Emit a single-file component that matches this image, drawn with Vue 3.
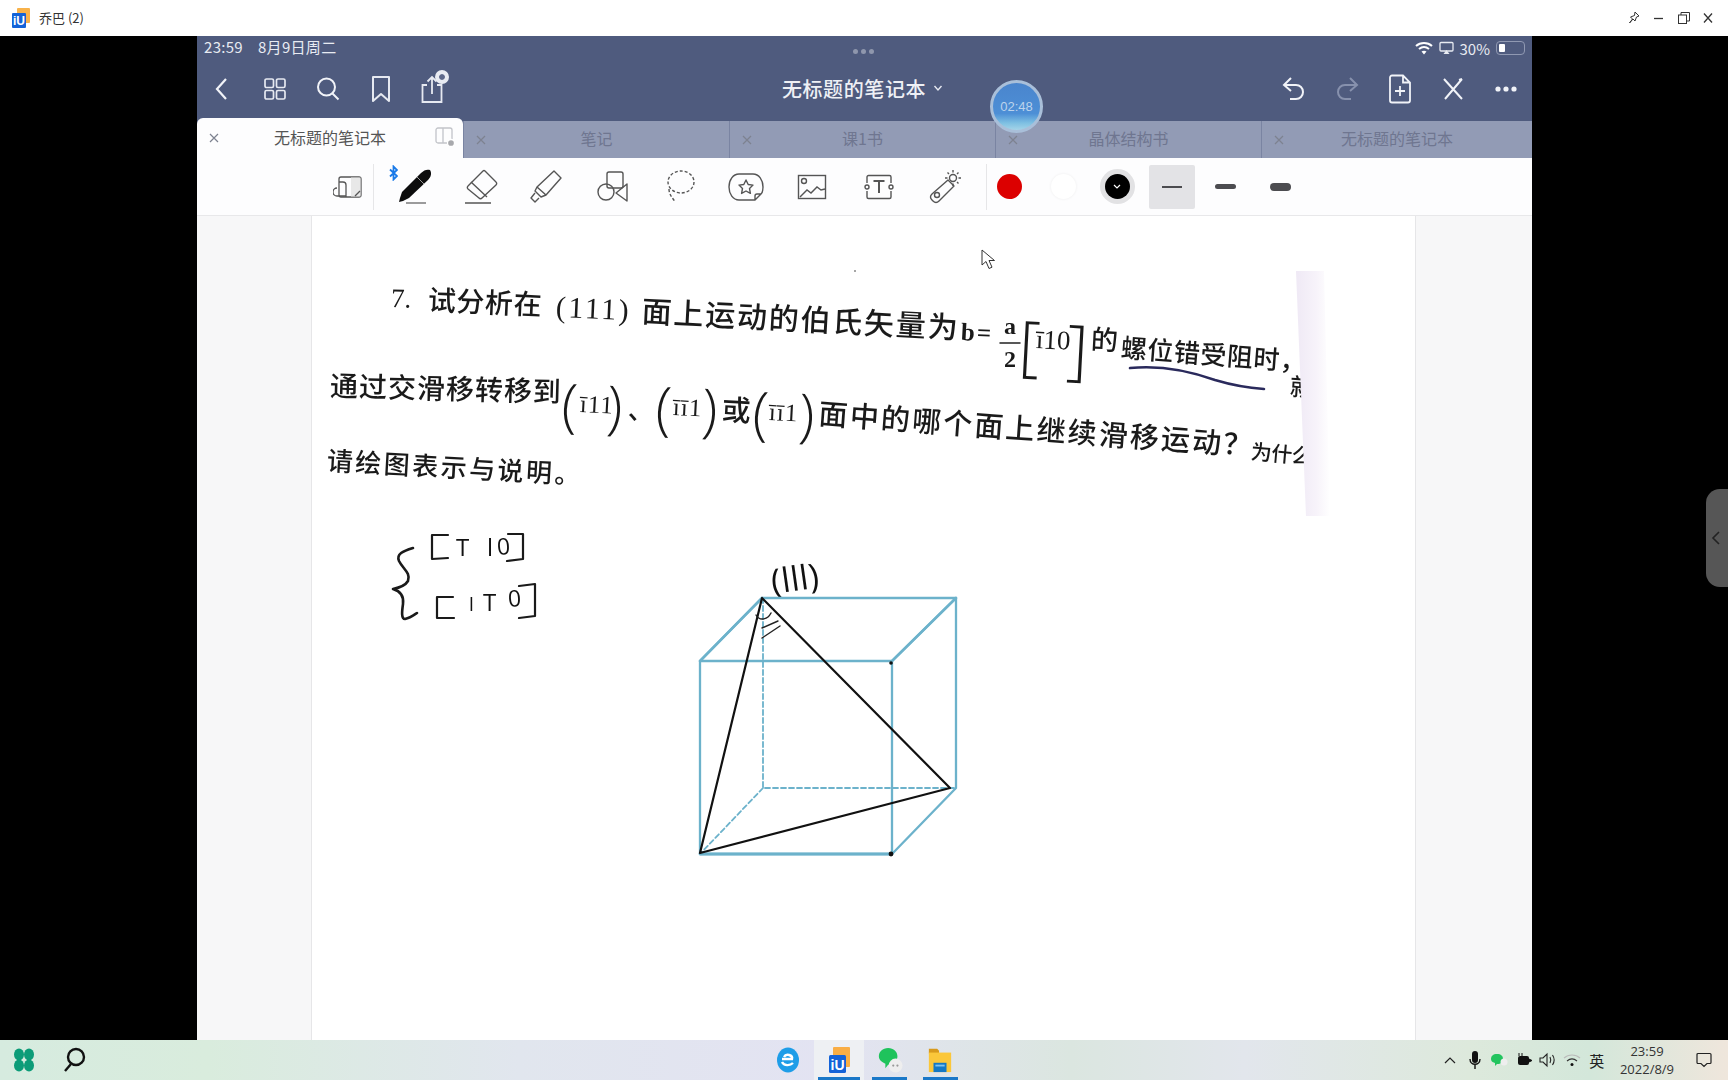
<template>
  <div class="screen">
    <header class="titlebar">
      <svg class="app-logo" width="20" height="20" viewBox="0 0 20 20">
        <rect x="6" y="0" width="13" height="15" rx="1" fill="#f8b24a" />
        <rect x="1" y="5" width="14" height="15" rx="1" fill="#1463d8" />
        <text x="8" y="17" font-size="12" font-weight="700" fill="#fff" text-anchor="middle" font-family="Liberation Sans, sans-serif">iU</text>
      </svg>
      <span class="app-name">乔巴 (2)</span>
      <div class="win-btns">
        <svg width="16" height="16" viewBox="0 0 16 16" fill="none" stroke="#333" stroke-width="1"><path d="M9 2l4 4-2.5 1-1.5 4-2-2-3.5 4 3-4-2-2 4-1.500z" /></svg>
        <svg width="16" height="16" viewBox="0 0 16 16" stroke="#333" stroke-width="1.300"><path d="M3 8.500h9" /></svg>
        <svg width="16" height="16" viewBox="0 0 16 16" fill="none" stroke="#333" stroke-width="1"><rect x="2.500" y="5" width="8" height="8.500" /><path d="M5 5V2.500h8.500V11H10.500" /></svg>
        <svg width="14" height="16" viewBox="0 0 14 16" stroke="#333" stroke-width="1.300"><path d="M3 3.500l8 9M11 3.500l-8 9" /></svg>
      </div>
    </header>

    <main class="stage">
      <section class="ipad">
        <div class="head">
          <div class="status">
            <span class="clock"><span>23:59</span><span>8月9日周二</span></span>
            <div class="grip"><i></i><i></i><i></i></div>
            <div class="status-right">
              <svg width="18" height="14" viewBox="0 0 18 14" fill="none" stroke="#fff" stroke-width="2"><path d="M1 5c4.500-4 11.500-4 16 0M4 8c3-2.500 7-2.500 10 0" /><path d="M9 13.500l-2.500-3c1.500-1 3.500-1 5 0z" fill="#fff" stroke="none" /></svg>
              <svg width="15" height="14" viewBox="0 0 15 14" fill="none" stroke="#e8ebf2" stroke-width="1.300"><rect x="1" y="1.500" width="13" height="8.500" rx="1" /><path d="M7.500 9l-3 4h6z" fill="#e8ebf2" stroke="none" /></svg>
              <span class="pct">30%</span>
              <span class="battery"><b></b></span>
            </div>
          </div>

          <nav class="nav">
            <div class="nav-side">
              <span class="cell"><svg width="24" height="28" viewBox="0 0 24 28" fill="none" stroke="#f1f3f8" stroke-width="2.200"><path d="M16 4L7 14l9 10" /></svg></span>
              <span class="cell"><svg width="24" height="24" viewBox="0 0 24 24" fill="none" stroke="#e6e9f1" stroke-width="1.700"><rect x="2" y="2" width="8.500" height="8.500" rx="1.500" /><rect x="13.500" y="2" width="8.500" height="8.500" rx="1.500" /><rect x="2" y="13.500" width="8.500" height="8.500" rx="1.500" /><rect x="13.500" y="13.500" width="8.500" height="8.500" rx="1.500" /></svg></span>
              <span class="cell"><svg width="26" height="26" viewBox="0 0 26 26" fill="none" stroke="#f1f3f8" stroke-width="2"><circle cx="11.500" cy="11" r="8.500" /><path d="M17.500 17.500l6 6" /></svg></span>
              <span class="cell"><svg width="22" height="28" viewBox="0 0 22 28" fill="none" stroke="#e6e9f1" stroke-width="2"><path d="M3 2h16v24l-8-7-8 7z" stroke-linejoin="round" /></svg></span>
              <span class="cell share">
                <svg width="24" height="30" viewBox="0 0 24 30" fill="none" stroke="#e6e9f1" stroke-width="1.800"><path d="M7 11H2.500v17h19V11H17M12 20V3M7.500 7.500L12 3l4.500 4.500" /></svg>
                <em class="share-badge"></em>
              </span>
            </div>
            <div class="nav-title">无标题的笔记本<svg width="10" height="8" viewBox="0 0 10 8" fill="none" stroke="#e6e9f1" stroke-width="1.400"><path d="M1.500 2L5 6l3.500-4" /></svg></div>
            <div class="nav-side end">
              <span class="cell"><svg width="24" height="28" viewBox="0 0 24 28" fill="none" stroke="#f1f3f8" stroke-width="2"><path d="M9 3L2 10l7 6M2 10h12c4 0 7 3 7 7s-3 7-7 7H8" /></svg></span>
              <span class="cell"><svg width="24" height="28" viewBox="0 0 24 28" fill="none" stroke="#8791ad" stroke-width="2"><path d="M15 3l7 7-7 6M22 10H10c-4 0-7 3-7 7s3 7 7 7h6" /></svg></span>
              <span class="cell"><svg width="24" height="30" viewBox="0 0 24 30" fill="none" stroke="#f1f3f8" stroke-width="1.800"><path d="M15 1.500H4a2 2 0 0 0-2 2v23a2 2 0 0 0 2 2h16a2 2 0 0 0 2-2V8.500zM15 1.500v7h7M12 12v10M7 17h10" /></svg></span>
              <span class="cell"><svg width="22" height="24" viewBox="0 0 22 24" fill="none" stroke="#f1f3f8" stroke-width="2"><path d="M2 2l18 20M20 2L3 22M20 2l-3 1" /></svg></span>
              <span class="cell"><svg width="24" height="6" viewBox="0 0 24 6" fill="#f1f3f8"><circle cx="4" cy="3" r="2.600" /><circle cx="12" cy="3" r="2.600" /><circle cx="20" cy="3" r="2.600" /></svg></span>
            </div>
          </nav>

          <div class="tabs">
            <div v-for="(tab, i) in tabs" :key="i" class="tab" :class="{ active: i === 0 }">
              <svg class="tab-x" width="10" height="10" viewBox="0 0 10 10" stroke="#7d8290" stroke-width="1.200"><path d="M1 1l8 8M9 1l-8 8" /></svg>
              <span>{{ tab }}</span>
              <svg v-if="i === 0" class="tab-split" width="20" height="20" viewBox="0 0 20 20" fill="none" stroke="#c2c4c9" stroke-width="1.300"><rect x="1" y="1" width="16" height="15" rx="2" /><path d="M8 1v15" /><circle cx="16" cy="16" r="3.500" fill="#a8a9ad" stroke="#fff" /></svg>
            </div>
          </div>

          <div class="timer"><span>02:48</span></div>
        </div>

        <div class="tools">
          <span class="tool"><svg width="30" height="26" viewBox="0 0 30 26" fill="none" stroke="#555" stroke-width="1.300"><rect x="6" y="3" width="22" height="20" rx="2" /><path d="M18 3.500h9.500v19h-9.500z" fill="#e8e8e8" stroke="none" /><path d="M6 8h4a3 3 0 0 1 3 3v12M4 14a4 4 0 0 0 0 8h9M22 22l5-5" /></svg></span>
          <i class="sep first"></i>
          <span class="tool pen">
            <svg class="bt" width="9" height="16" viewBox="0 0 9 16" fill="none" stroke="#1a7ae8" stroke-width="1.800"><path d="M1 4.500l7 6.500-3.500 3.500V1.500L8 5 1 11.500" /></svg>
            <svg width="38" height="36" viewBox="0 0 38 36"><path d="M35 1c2 3 1 7-2 10L14 29l-6 3-4 1 1-4 2-6L26 4c3-3 6-4 9-3z" fill="#0d0d0d" /><path d="M22 8l7 7" stroke="#999" stroke-width="1" /><path d="M11 34h20" stroke="#666" stroke-width="1.300" /></svg>
          </span>
          <span class="tool"><svg width="36" height="36" viewBox="0 0 36 36" fill="none" stroke="#555" stroke-width="1.400" stroke-linejoin="round"><path d="M22 2l11 11a2 2 0 0 1 0 3L19 29a2 2 0 0 1-3 0L5 20a2 2 0 0 1 0-3L20 2a1.500 1.500 0 0 1 2 0z" /><path d="M8 13l16 15M2 34h26" /></svg></span>
          <span class="tool"><svg width="36" height="36" viewBox="0 0 36 36" fill="none" stroke="#555" stroke-width="1.400" stroke-linejoin="round"><path d="M25 2l7 7-15 17-9-8zM8 18l-2 4 6 6 5-2M6 24l-4 5 4 4 4-4" /></svg></span>
          <span class="tool"><svg width="34" height="34" viewBox="0 0 34 34" fill="none" stroke="#555" stroke-width="1.400"><rect x="11" y="2" width="16" height="16" rx="2" /><circle cx="10" cy="22" r="8" /><path d="M31 14v17l-11-8z" stroke-linejoin="round" /></svg></span>
          <span class="tool"><svg width="32" height="36" viewBox="0 0 32 36" fill="none" stroke="#555" stroke-width="1.400" stroke-dasharray="3 2"><ellipse cx="17" cy="13" rx="13" ry="11" /><path d="M5 20c0 6 4 9 6 13" /></svg></span>
          <span class="tool"><svg width="36" height="30" viewBox="0 0 36 30" fill="none" stroke="#555" stroke-width="1.400" stroke-linejoin="round"><path d="M27 28H11C5 28 1 22 1 15S5 2 11 2h14c6 0 10 6 10 13 0 3-1 6-2 7l-6 6zM27 28v-4c0-1.500 1-2 2-2h4" /><path d="M18 8l2.200 4.500 4.800.6-3.500 3.400.9 4.900-4.400-2.400-4.400 2.400.9-4.900-3.500-3.400 4.800-.6z" /></svg></span>
          <span class="tool"><svg width="30" height="26" viewBox="0 0 30 26" fill="none" stroke="#555" stroke-width="1.400"><rect x="1.500" y="1.500" width="27" height="23" /><circle cx="7" cy="7" r="2.500" /><path d="M3 23l7-7 4 3 6-6 4 3 4-1" /></svg></span>
          <span class="tool"><svg width="30" height="26" viewBox="0 0 30 26" fill="none" stroke="#555" stroke-width="1.400"><path d="M3 9V3a1.500 1.500 0 0 1 1.500-1.500h21A1.500 1.500 0 0 1 27 3v6M3 17v6a1.500 1.500 0 0 0 1.500 1.500h21A1.500 1.500 0 0 0 27 23v-6" /><circle cx="3" cy="13" r="2" /><circle cx="27" cy="13" r="2" /><path d="M9.500 7h11M15 7v12" stroke-width="2" /></svg></span>
          <span class="tool"><svg width="36" height="36" viewBox="0 0 36 36" fill="none" stroke="#555" stroke-width="1.400"><path d="M21 11l6 6-15 15c-2 2-4 2-6 0l-1-1c-2-2-2-4 0-6z" stroke-linejoin="round" /><circle cx="10" cy="26" r="2.500" /><circle cx="26" cy="9" r="3.500" /><path d="M26 1v2.500M26 14.500V17M18 9h2.500M31.500 9H34M20.500 3.500l1.500 1.500M30 13l1.500 1.500M31.500 3.500L30 5" /></svg></span>
          <i class="sep second"></i>
          <span class="swatch-cell"><b class="swatch red"></b></span>
          <span class="swatch-cell"><b class="swatch white"></b></span>
          <span class="swatch-cell"><b class="swatch black"><svg width="8" height="6" viewBox="0 0 8 6" fill="none" stroke="#fff" stroke-width="1.200"><path d="M1 1l3 3 3-3" /></svg></b></span>
          <span class="swatch-cell picked"><b class="line thin"></b></span>
          <span class="swatch-cell"><b class="line mid"></b></span>
          <span class="swatch-cell"><b class="line thick"></b></span>
        </div>

        <div class="doc">
          <article class="page">
            <div class="scan">
              <span
                v-for="(s, i) in segments"
                :key="i"
                class="seg"
                :class="s.f"
                :style="segStyle(s)"
              >{{ s.t }}</span>
            </div>
            <svg class="ink" width="1103" height="825" viewBox="312 215 1103 825" fill="none" stroke-linecap="round" stroke-linejoin="round">
              <defs>
                <linearGradient id="strip" x1="0" y1="0" x2="1" y2="0">
                  <stop offset="0" stop-color="#efe9f5" />
                  <stop offset="0.6" stop-color="#f7f3fa" />
                  <stop offset="1" stop-color="#ffffff" />
                </linearGradient>
              </defs>
              <polygon points="1296,270 1324,270 1330,515 1306,515" fill="url(#strip)" />
              <path d="M1000 342h20" stroke="#222" stroke-width="1.500" />
              <path d="M1130 367C1160 364 1190 370 1215 379 1235 385 1250 387 1264 388" stroke="#2a2a5c" stroke-width="2.600" />
              <circle cx="855" cy="270" r="1" fill="#888" />
              <g stroke="#6cb2cb" stroke-width="2.300">
                <path d="M762 597H956L892 660H700ZM700 660V853H892V660M956 597V787L892 853" />
                <path d="M762 597L700 660M956 597L892 660" stroke-width="2.600" />
                <path d="M700 853H892" stroke-width="2.800" />
                <path d="M763 597V787H956M763 787L700 853" stroke-dasharray="5 3" stroke-width="1.800" />
              </g>
              <path d="M762 597L700 852 950 787Z" stroke="#111" stroke-width="2.200" />
              <path d="M756 614C760 621 768 618 771 612M762 627L778 620M762 637L780 625" stroke="#222" stroke-width="1.400" />
              <circle cx="891" cy="662" r="1.800" fill="#111" />
              <circle cx="891" cy="853" r="2.400" fill="#111" />
              <g stroke="#1a1a1a" stroke-width="2.200">
                <path d="M413 547C403 550 396 553 399 560 403 568 411 572 408 580 405 585 398 587 393 588 400 590 404 595 403 603 402 610 401 618 405 618 410 617 414 614 417 612" stroke-width="2.600" />
                <path d="M448 534H432V558L448 557M508 533H523V558L507 560" />
                <path d="M453 596H437V617H454M519 585L535 583V615L519 617" />
              </g>
            </svg>
          </article>
        </div>
      </section>
      <svg class="cursor" width="16" height="22" viewBox="0 0 16 22"><path d="M1 1v15l4-3.500 3 7 3-1.300-3-6.700h5.500z" fill="#fff" stroke="#333" stroke-width="1" /></svg>
      <div class="side-tab"><svg width="10" height="16" viewBox="0 0 10 16" fill="none" stroke="#222" stroke-width="1.600"><path d="M8 2L2 8l6 6" /></svg></div>
    </main>

    <footer class="taskbar">
      <div class="tb-left">
        <svg width="24" height="24" viewBox="0 0 24 24" fill="#0c9c78"><ellipse cx="7" cy="6.500" rx="5" ry="6" /><ellipse cx="17" cy="6.500" rx="5" ry="6" /><ellipse cx="7" cy="17.500" rx="5" ry="6" /><ellipse cx="17" cy="17.500" rx="5" ry="6" /></svg>
        <svg width="26" height="26" viewBox="0 0 26 26" fill="none" stroke="#111" stroke-width="2.400"><circle cx="15" cy="10" r="8" /><path d="M10 17l-6 7" /></svg>
      </div>
      <div class="tb-center">
        <span class="tb-item"><svg width="24" height="26" viewBox="0 0 24 26"><ellipse cx="12" cy="13" rx="11" ry="12.500" fill="#1e9de8" /><path d="M6 12h10c1-4-6-6-8-2M6 15c2 4 8 4 11 1" fill="none" stroke="#fff" stroke-width="2.400" /></svg></span>
        <span class="tb-item current run"><svg width="26" height="28" viewBox="0 0 26 28"><rect x="7" y="1" width="17" height="20" rx="1" fill="#f9ae45" /><rect x="3" y="9" width="17" height="18" rx="1.500" fill="#1463d8" /><text x="11.500" y="24" font-size="14" font-weight="700" fill="#fff" text-anchor="middle" font-family="Liberation Sans, sans-serif">iU</text></svg></span>
        <span class="tb-item run"><svg width="26" height="26" viewBox="0 0 28 28"><path d="M12 1c6 0 10 4 10 9s-4 9-10 9l-3 4v-5C5 16 2 14 2 10c0-5 4-9 10-9z" fill="#1fc35c" /><circle cx="20" cy="20" r="7.500" fill="#eeeeee" /><circle cx="17.500" cy="20" r="1.200" fill="#999" /><circle cx="22" cy="20" r="1.200" fill="#999" /></svg></span>
        <span class="tb-item run"><svg width="26" height="26" viewBox="0 0 26 28"><path d="M1 2h9l2 2v3H1z" fill="#d89a1c" /><rect x="1" y="6" width="24" height="21" fill="#fbc73a" /><rect x="6" y="17" width="14" height="10" fill="#1478c4" /><rect x="8" y="19" width="10" height="2" fill="#7fc2ee" /></svg></span>
      </div>
      <div class="tb-right">
        <span class="tray"><svg width="12" height="8" viewBox="0 0 12 8" fill="none" stroke="#222" stroke-width="1.200"><path d="M1 7l5-5 5 5" /></svg></span>
        <span class="tray"><svg width="14" height="20" viewBox="0 0 14 20"><rect x="4" y="1" width="6" height="12" rx="3" fill="#111" /><path d="M2 9c0 7 10 7 10 0M7 14v5" fill="none" stroke="#111" stroke-width="1.400" /></svg></span>
        <span class="tray"><svg width="18" height="14" viewBox="0 0 18 14"><path d="M7 1c4 0 6 2 6 5s-2 5-6 5l-2 2v-3C2 9 1 8 1 6c0-3 2-5 6-5z" fill="#22c45e" /><circle cx="14" cy="9" r="3.500" fill="#eee" /></svg></span>
        <span class="tray"><svg width="18" height="16" viewBox="0 0 18 16"><rect x="3" y="4" width="11" height="9" rx="2" fill="#111" /><path d="M14 7l3 1.500-3 1.500zM4 4V1M7 4V1" fill="#111" stroke="#111" /></svg></span>
        <span class="tray"><svg width="18" height="16" viewBox="0 0 18 16" fill="none" stroke="#222" stroke-width="1.100"><path d="M1 6h3l4-4v12l-4-4H1zM11 5c1 2 1 4 0 6M13.500 3c2 3 2 7 0 10" /></svg></span>
        <span class="tray"><svg width="18" height="14" viewBox="0 0 18 14" fill="none" stroke="#bbb" stroke-width="1.100"><path d="M1 5c4.500-4 11.500-4 16 0" /><path d="M4 8c3-2.500 7-2.500 10 0" stroke="#333" /><circle cx="9" cy="11.500" r="1.500" fill="#111" stroke="none" /></svg></span>
        <span class="tray lang">英</span>
        <div class="tb-clock"><span>23:59</span><span>2022/8/9</span></div>
        <svg width="16" height="16" viewBox="0 0 16 16" fill="none" stroke="#222" stroke-width="1.200"><path d="M2 1.500h12a1 1 0 0 1 1 1v8a1 1 0 0 1-1 1h-3l-3 3-3-3H2a1 1 0 0 1-1-1v-8a1 1 0 0 1 1-1z" /></svg>
      </div>
    </footer>
  </div>
</template>

<script setup>
const tabs = ['无标题的笔记本', '笔记', '课1书', '晶体结构书', '无标题的笔记本']

// place of each scanned line on the page, in screen pixels
const segments = [
  { t: '7.', x: 391, y: 297, s: 27, r: 2, f: 'num' },
  { t: '试分析在', x: 428, y: 297, s: 28, ls: 0.6, r: 2.5, f: 'cn' },
  { t: '(111)', x: 556, y: 306, s: 30, ls: 2.5, r: 2.5, f: 'num' },
  { t: '面上运动的伯氏矢量为', x: 642, y: 308, s: 30, ls: 1.8, r: 3, f: 'cn' },
  { t: 'b=', x: 961, y: 330, s: 25, ls: 2, r: 3, f: 'num bold' },
  { t: 'a', x: 1004, y: 325, s: 24, r: 0, f: 'num bold' },
  { t: '2', x: 1004, y: 358, s: 24, r: 0, f: 'num bold' },
  { t: '[', x: 1019, y: 341, s: 66, r: 3, f: 'thin' },
  { t: 'ī10', x: 1036, y: 338, s: 27, r: 3, f: 'num' },
  { t: ']', x: 1067, y: 345, s: 66, r: 3, f: 'thin' },
  { t: '的', x: 1091, y: 336, s: 27, r: 3, f: 'cn' },
  { t: '螺位错受阻时，', x: 1121, y: 345, s: 26, ls: 0.6, r: 4.5, f: 'cn' },
  { t: '就', x: 1290, y: 384, s: 24, r: 4, f: 'cn' },

  { t: '通过交滑移转移到', x: 330, y: 383, s: 28, ls: 1, r: 1.5, f: 'cn' },
  { t: '(', x: 562, y: 402, s: 58, r: 3, f: 'thin' },
  { t: 'ī11', x: 580, y: 402, s: 25, ls: 1, r: 3, f: 'num' },
  { t: ')', x: 607, y: 404, s: 58, r: 3, f: 'thin' },
  { t: '、', x: 628, y: 407, s: 26, r: 3, f: 'cn' },
  { t: '(', x: 656, y: 405, s: 58, r: 3, f: 'thin' },
  { t: 'īī1', x: 673, y: 405, s: 25, ls: 1, r: 3, f: 'num' },
  { t: ')', x: 702, y: 407, s: 58, r: 3, f: 'thin' },
  { t: '或', x: 722, y: 406, s: 29, r: 3, f: 'cn' },
  { t: '(', x: 753, y: 410, s: 58, r: 3, f: 'thin' },
  { t: 'īī1', x: 769, y: 410, s: 25, ls: 1, r: 3, f: 'num' },
  { t: ')', x: 799, y: 412, s: 58, r: 3, f: 'thin' },
  { t: '面中的哪个面上继续滑移运动？', x: 819, y: 410, s: 29, ls: 2.2, r: 4.2, f: 'cn' },
  { t: '为什么', x: 1251, y: 449, s: 21, ls: -0.5, r: 5, f: 'cn' },

  { t: '请绘图表示与说明。', x: 327, y: 458, s: 26, ls: 2.5, r: 3.2, f: 'cn' },

  // handwriting
  { t: 'T', x: 456, y: 546, s: 24, r: 0, f: 'hand' },
  { t: 'l', x: 487, y: 546, s: 24, r: 0, f: 'hand' },
  { t: '0', x: 497, y: 545, s: 23, r: -4, f: 'hand' },
  { t: 'l', x: 469, y: 603, s: 19, r: 0, f: 'hand' },
  { t: 'T', x: 483, y: 601, s: 24, r: 0, f: 'hand' },
  { t: '0', x: 508, y: 597, s: 23, r: -4, f: 'hand' },
  { t: '(lll)', x: 771, y: 580, s: 34, ls: 0.5, r: -8, f: 'hand' },
]

const segStyle = (s) => ({
  left: `${s.x - 312}px`,
  top: `${s.y - 215 - s.s / 2}px`,
  fontSize: `${s.s}px`,
  letterSpacing: `${s.ls || 0}px`,
  transform: `rotate(${s.r}deg)`,
})
</script>

<style>
html, body { margin: 0; background: #000; }
</style>

<style scoped>
.screen {
  width: 1728px;
  height: 1080px;
  display: flex;
  flex-direction: column;
  overflow: hidden;
  font-family: "Noto Sans CJK SC", "Liberation Sans", sans-serif;
}

.titlebar {
  height: 36px;
  flex: none;
  display: flex;
  align-items: center;
  padding: 0 13px 0 11px;
  background: #fff;
  box-sizing: border-box;
}
.app-logo { margin-right: 8px; }
.app-name { font-size: 13px; color: #333; margin-top: -2px; }
.win-btns { margin-left: auto; display: flex; align-items: center; gap: 9px; }

.stage {
  flex: 1;
  min-height: 0;
  position: relative;
  background: #000;
  padding-left: 197px;
}
.ipad {
  width: 1335px;
  height: 100%;
  display: flex;
  flex-direction: column;
  background: #f7f7f8;
}

.head { position: relative; flex: none; background: #4f5b7e; }
.status {
  height: 28px;
  display: flex;
  align-items: center;
  justify-content: space-between;
  padding: 0 6px 7px 7px;
  box-sizing: border-box;
  color: #e8ebf2;
  font-size: 14px;
  position: relative;
}
.clock { display: flex; gap: 15px; font-size: 15px; letter-spacing: 0.3px; }
.grip {
  position: absolute;
  left: 656px;
  top: 13px;
  display: flex;
  gap: 3px;
}
.grip i { width: 5px; height: 5px; border-radius: 50%; background: #8f97ad; }
.status-right { display: flex; align-items: center; gap: 6px; margin-right: 1px; margin-top: 3px; }
.pct { font-size: 15px; }
.battery {
  width: 29px;
  height: 14px;
  border: 1px solid #9099b2;
  border-radius: 4px;
  box-sizing: border-box;
  padding: 2px;
  display: flex;
}
.battery b { width: 6px; background: #fff; border-radius: 1px; }

.nav {
  height: 50px;
  display: grid;
  grid-template-columns: 1fr auto 1fr;
  align-items: center;
}
.nav-side { display: flex; align-items: center; margin-left: -2px; }
.nav-side.end { justify-content: flex-end; margin-left: 0; }
.cell {
  width: 53px;
  height: 40px;
  display: flex;
  align-items: center;
  justify-content: center;
  position: relative;
}
.cell.share svg { margin-left: -4px; }
.share-badge {
  position: absolute;
  left: 28px;
  top: 1px;
  width: 14px;
  height: 14px;
  border-radius: 50%;
  background: #e8ebf2;
  box-sizing: border-box;
  border: 4px solid #e8ebf2;
  box-shadow: inset 0 0 0 3px #5d688a;
}
.nav-title {
  display: flex;
  align-items: center;
  gap: 7px;
  font-size: 20px;
  font-weight: 500;
  letter-spacing: 0.6px;
  color: #eef0f5;
  margin: -2px 0 0 -4px;
}

.tabs {
  height: 44px;
  display: flex;
  align-items: flex-end;
}
.tab {
  width: 266px;
  flex: none;
  height: 37px;
  position: relative;
  display: flex;
  align-items: center;
  justify-content: center;
  font-size: 16px;
  color: #6f7690;
  background: #929bb5;
  border-left: 1px solid #7a84a2;
  box-sizing: border-box;
  padding-bottom: 3px;
}
.tab:last-child { flex: 1; }
.tab.active {
  height: 40px;
  color: #555;
  background: #fdfdfe;
  border-left: 0;
  border-radius: 6px 6px 0 0;
}
.tab-x { position: absolute; left: 12px; top: 50%; margin-top: -5px; }
.tab-split { position: absolute; right: 8px; top: 9px; }

.timer {
  position: absolute;
  left: 793px;
  top: 44px;
  width: 53px;
  height: 53px;
  box-sizing: border-box;
  border-radius: 50%;
  border: 3px solid #a9bfd9;
  background: linear-gradient(180deg, #4a85cd 0%, #4d8fd6 65%, #7ec0e2 85%, #a5d4e8 100%);
  display: flex;
  align-items: center;
  justify-content: center;
  color: #bcd3ec;
  font-size: 13px;
  font-family: "Liberation Sans", sans-serif;
}

.tools {
  height: 57px;
  flex: none;
  display: flex;
  align-items: center;
  padding-left: 118px;
  background: #fdfdfe;
  border-bottom: 1px solid #e8e8ea;
}
.tool {
  width: 66.3px;
  height: 44px;
  display: flex;
  align-items: center;
  justify-content: center;
  position: relative;
  flex: none;
}
.bt { position: absolute; left: 8px; top: 0; }
.sep { width: 1px; height: 46px; background: #e6e6e8; flex: none; }
.sep.first { margin: 0 7px 0 -8px; }
.sep.second { margin: 0 -5px 0 8px; }
.swatch-cell {
  width: 54.2px;
  height: 44px;
  display: flex;
  align-items: center;
  justify-content: center;
  flex: none;
}
.swatch-cell.picked {
  width: 46px;
  margin: 0 4.1px;
  background: #e3e3e6;
  border-radius: 2px;
}
.swatch { width: 25px; height: 25px; border-radius: 50%; display: flex; align-items: center; justify-content: center; }
.swatch.red { background: #dc0000; }
.swatch.white { background: #fff; box-shadow: 0 0 3px #eee; }
.swatch.black { background: #000; box-shadow: 0 0 0 5px #e2e2e4; }
.line { display: block; background: #4c4c50; }
.line.thin { width: 20px; height: 2px; }
.line.mid { width: 21px; height: 5px; border-radius: 3px; }
.line.thick { width: 21px; height: 8px; border-radius: 4px; }

.doc { flex: 1; min-height: 0; padding: 0 117px 0 115px; }
.page {
  height: 100%;
  position: relative;
  background: #fff;
  box-shadow: -1px 0 0 #e6e6e8, 1px 0 0 #e6e6e8;
  overflow: hidden;
}
.scan { position: absolute; inset: 0; filter: blur(0.3px); }
.seg {
  position: absolute;
  line-height: 1;
  white-space: nowrap;
  color: #1a1a1a;
  transform-origin: left center;
}
.seg.num { font-family: "Liberation Serif", serif; }
.seg.bold { font-weight: 700; }
.seg.cn { font-family: "Noto Sans CJK SC", sans-serif; font-weight: 500; }
.seg.thin { font-family: "Open Sans", sans-serif; font-weight: 300; }
.seg.hand { font-family: "Open Sans", sans-serif; font-weight: 400; color: #111; }
.ink { position: absolute; left: 0; top: 0; }

.cursor { position: absolute; left: 981px; top: 213px; }
.side-tab {
  position: absolute;
  right: 0;
  top: 453px;
  width: 20px;
  height: 98px;
  background: #565656;
  border-radius: 14px 0 0 14px;
  display: flex;
  align-items: center;
  padding-left: 2px;
}
.side-tab svg { margin-left: 3px; }

.taskbar {
  height: 40px;
  flex: none;
  display: flex;
  align-items: center;
  position: relative;
  background: linear-gradient(90deg, #d6ebdf 0%, #d9ecdd 12%, #e1e6ee 30%, #e3e3f2 48%, #dbe6e0 62%, #e2e6ec 72%, #dde9dc 85%, #d3e7da 92%, #efe6dc 100%);
}
.tb-left { display: flex; align-items: center; gap: 25px; padding-left: 12px; }
.tb-center {
  display: flex;
  position: absolute;
  left: 763px;
  top: 0;
  height: 40px;
}
.tb-item {
  width: 50.7px;
  height: 40px;
  position: relative;
  display: flex;
  align-items: center;
  justify-content: center;
}
.tb-item.run::after {
  content: "";
  position: absolute;
  left: 8px;
  right: 8px;
  bottom: 0;
  height: 3px;
  background: #1a78c8;
}
.tb-item.current { background: #eef0f3; }
.tb-item.current::after { left: 4px; right: 4px; }
.tb-right {
  margin-left: auto;
  display: flex;
  align-items: center;
  padding-right: 16px;
  color: #222;
}
.tray {
  width: 24.4px;
  display: flex;
  align-items: center;
  justify-content: center;
}
.lang { font-size: 15px; }
.tb-clock {
  display: flex;
  flex-direction: column;
  align-items: center;
  width: 56px;
  font-family: "Open Sans", sans-serif;
  font-size: 13px;
  line-height: 18px;
  margin: 0 21px 0 10px;
  color: #333;
}
</style>
